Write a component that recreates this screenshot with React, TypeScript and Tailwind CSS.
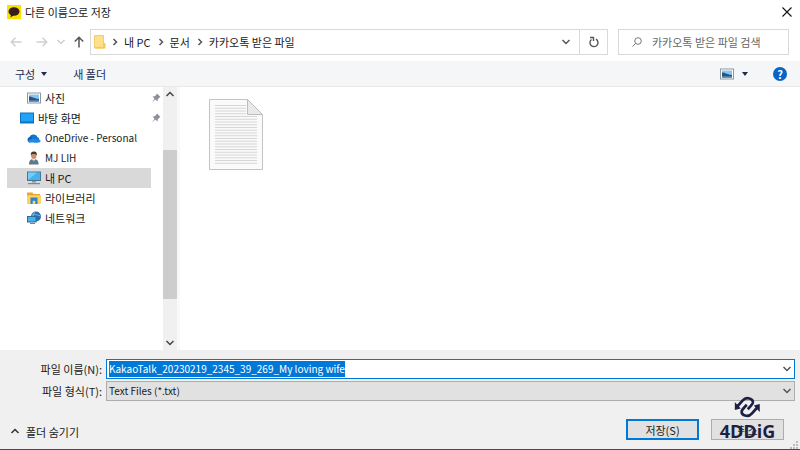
import React, { useEffect, useRef } from "react"

function Chevron({ dir, className = "" }: { dir: "up" | "down" | "right"; className?: string }) {
    const d = { up: "M1.5 6 5 2.5 8.5 6", down: "M1.5 3 5 6.5 8.5 3", right: "M3.5 2 6.5 5 3.5 8" }[dir]
    return (
        <svg viewBox="0 0 10 10" className={`size-[10px] shrink-0 ${className}`} fill="none" stroke="currentColor" strokeWidth="1.5">
            <path d={d} />
        </svg>
    )
}

function Arrow({ rotate = "" }: { rotate?: string }) {
    return (
        <svg viewBox="0 0 12 12" className={`size-3 ${rotate}`} fill="none" stroke="currentColor" strokeWidth="1.5">
            <path d="M11.5 6H1.5M5.5 1.8 1.3 6l4.2 4.2" />
        </svg>
    )
}

function PictureIcon() {
    return (
        <svg viewBox="0 0 14 12" className="h-3 w-[14px] shrink-0">
            <rect x=".5" y="1" width="13" height="10" fill="#fff" stroke="#8f979e" />
            <rect x="2" y="2.5" width="10" height="7" fill="#8cc3ee" />
            <path d="M2 4.5c3 0 4 1.6 10 2.5v2.5H2z" fill="#28547c" />
            <path d="M2 8.3h10v1.2H2z" fill="#4f8fc4" />
        </svg>
    )
}

function DesktopIcon() {
    return (
        <svg viewBox="0 0 14 12" className="h-3 w-[14px] shrink-0">
            <rect x=".5" y="1" width="13" height="10" fill="#22a4f5" stroke="#0873c4" />
            <path d="M1 10h12" stroke="#0b65ad" />
        </svg>
    )
}

function CloudIcon() {
    return (
        <svg viewBox="0 0 14 12" className="h-3 w-[14px] shrink-0">
            <path d="M3 10.5A2.8 2.8 0 0 1 2.6 5 4.2 4.2 0 0 1 10 4.3l-4 5z" fill="#0f5fb8" />
            <path d="M4 4.2A4 4 0 0 1 10.4 5a3 3 0 0 1 .4 5.5H7z" fill="#1276d3" />
            <path d="M.6 9C3 7 6 6.6 8 6.8l5.6 1.7a1.8 1.8 0 0 1-1.8 2H3A2.6 2.6 0 0 1 .6 9z" fill="#1b8ce0" />
        </svg>
    )
}

function UserIcon() {
    return (
        <svg viewBox="0 0 14 14" className="size-[14px] shrink-0">
            <path d="M2 13.5C2 9.7 3.6 8 6.6 8s5 1.7 5 5.5z" fill="#65757f" />
            <path d="m5 8 1.7 3L8.5 8z" fill="#e8eef2" />
            <ellipse cx="6.8" cy="4.5" rx="2.7" ry="3.5" fill="#c89070" />
            <path d="M3.9 4.5C3.4 1.3 5 .4 7 .4s3.4 1.3 2.7 4.1C9 3 7.5 2.8 5 3z" fill="#443a34" />
            <path d="m6 9 1 4 2-2.5z" fill="#318bc0" />
        </svg>
    )
}

function ComputerIcon() {
    return (
        <svg viewBox="0 0 14 14" className="size-[14px] shrink-0">
            <rect x=".5" y="1" width="13" height="8.5" fill="#45b2ee" stroke="#4b7690" />
            <path d="M1 9V1.5h9z" fill="#79ccf5" />
            <path d="M5 10h4v1.5H5z" fill="#8699a5" />
            <path d="M1 12.7h12" stroke="#5d7a8c" />
        </svg>
    )
}

function LibraryIcon() {
    return (
        <svg viewBox="0 0 14 12" className="h-3 w-[14px] shrink-0">
            <path d="M0 .5h5.5l1 1.5H13v9.5H0z" fill="#e9a52c" />
            <path d="M0 3.3h14v8.2H0z" fill="#ffd35d" />
            <path d="M3.5 12V5.5h7V12H8.3V8.8H5.7V12z" fill="#2787d2" />
        </svg>
    )
}

function NetworkIcon() {
    return (
        <svg viewBox="0 0 14 14" className="size-[14px] shrink-0">
            <circle cx="9" cy="5.5" r="5" fill="#2b6cae" />
            <path d="M8 1c-3 3-2 6 1 9M5 4c3-1 6 0 8.5 1" stroke="#78bde9" fill="none" />
            <rect x=".5" y="5.5" width="8.5" height="5.5" fill="#42b4f2" stroke="#326b91" />
            <path d="M3 12.5h5" stroke="#6688a0" />
        </svg>
    )
}

function Pin() {
    return (
        <svg viewBox="0 0 10 10" className="size-[10px] shrink-0 text-[#8b9198]">
            <path d="m6 .5 3.5 3.5-1 .5-1.7 1.7-.3 2.3-2.2-2L1 9.5l2.5-3.7-2-2.3 2.3-.3 1.7-1.7z" fill="currentColor" />
        </svg>
    )
}

const places = [
    { name: "사진", icon: <PictureIcon />, pinned: true },
    { name: "바탕 화면", icon: <DesktopIcon />, pinned: true, root: true },
    { name: "OneDrive - Personal", icon: <CloudIcon />, latin: true },
    { name: "MJ LIH", icon: <UserIcon />, latin: true },
    { name: "내 PC", icon: <ComputerIcon />, selected: true },
    { name: "라이브러리", icon: <LibraryIcon /> },
    { name: "네트워크", icon: <NetworkIcon /> },
]

const crumbs = ["내 PC", "문서", "카카오톡 받은 파일"]

function TitleBar() {
    return (
        <header className="flex h-6 items-center gap-1 pl-[7px] pr-2">
            <svg viewBox="0 0 14 14" className="size-[14px]">
                <rect width="14" height="14" fill="#fae100" />
                <ellipse cx="7" cy="6.5" rx="5.5" ry="4.3" fill="#371d1e" />
                <path d="m4 9-.5 3.5L7 10z" fill="#371d1e" />
            </svg>
            <h1 className="flex-1">다른 이름으로 저장</h1>
            <button aria-label="닫기">
                <svg viewBox="0 0 10 10" className="size-[10px]" stroke="#111" strokeWidth="1.1">
                    <path d="m.5.5 9 9M9.5.5l-9 9" />
                </svg>
            </button>
        </header>
    )
}

function AddressBar() {
    return (
        <nav className="flex h-9 items-center pl-[10px] pr-[11px]">
            <div className="flex w-20 shrink-0 items-center">
                <button aria-label="뒤로" className="w-[26px] text-[#cfcfcf]"><Arrow /></button>
                <button aria-label="앞으로" className="w-5 text-[#cfcfcf]"><Arrow rotate="rotate-180" /></button>
                <button aria-label="최근 위치" className="w-[17px] text-[#cfcfcf]"><Chevron dir="down" /></button>
                <button aria-label="위로" className="text-[#555]"><Arrow rotate="rotate-90" /></button>
            </div>
            <div className="flex h-[26px] flex-1 items-center border border-[#d9d9d9] pl-[3px]">
                <svg viewBox="0 0 12 14" className="mr-1 h-[14px] w-3">
                    <path d="M.5.5h9V13h-9z" fill="#ffe08a" stroke="#f3cd6c" />
                    <path d="M9.5 8h2v5.5H1V12h8.5z" fill="#f7c94f" />
                </svg>
                {crumbs.map((c) => (
                    <React.Fragment key={c}>
                        <Chevron dir="right" className="text-[#555]" />
                        <button className="pl-1 pr-[5px]">{c}</button>
                    </React.Fragment>
                ))}
                <button aria-label="이전 위치" className="ml-auto mr-2 text-[#555]"><Chevron dir="down" /></button>
                <button aria-label="새로 고침" className="flex h-full w-7 items-center justify-center border-l border-[#d9d9d9] text-[#555]">
                    <svg viewBox="0 0 10 12" className="h-3 w-[10px]" fill="none" stroke="currentColor" strokeWidth="1.4">
                        <path d="M7 3.2A4 4 0 1 1 2.5 3.5M1 1.5h3.500V5" />
                    </svg>
                </button>
            </div>
            <label className="ml-[10px] flex h-[26px] w-[171px] items-center border border-[#d9d9d9] pl-[13px]">
                <svg viewBox="0 0 10 10" className="size-[10px] shrink-0" fill="none" stroke="#777">
                    <circle cx="6" cy="4" r="3.3" />
                    <path d="M3.6 6.4.5 9.5" />
                </svg>
                <input type="search" aria-label="검색" placeholder="카카오톡 받은 파일 검색" className="ml-[10px] w-full min-w-0 outline-none placeholder:text-[#666]" />
            </label>
        </nav>
    )
}

function Toolbar() {
    return (
        <div className="mt-px flex h-[26px] items-center border-b border-[#e8e8e8] bg-[#f5f6f7] pl-[15px] pr-[13px] text-[#1e2b52]">
            <button className="flex items-center gap-[6px]">
                구성
                <svg viewBox="0 0 6 4" className="h-1 w-[6px]"><path d="M0 0h6L3 4z" fill="currentColor" /></svg>
            </button>
            <button className="ml-[26px]">새 폴더</button>
            <button aria-label="보기" className="ml-auto flex items-center gap-2">
                <PictureIcon />
                <svg viewBox="0 0 6 4" className="h-1 w-[6px]"><path d="M0 0h6L3 4z" fill="currentColor" /></svg>
            </button>
            <button aria-label="도움말" className="ml-[25px] size-[14px] rounded-full bg-[#0a64c8] text-center font-bold leading-[14px] text-white">?</button>
        </div>
    )
}

function Sidebar() {
    return (
        <aside className="flex w-[180px] shrink-0 border-r-[3px] border-[#f9f9f9]">
            <ul className="flex-1 pl-[7px] pr-3 pt-px">
                {places.map((p) => (
                    <li key={p.name}>
                        <button className={`flex h-5 w-full items-center gap-1 ${p.root ? "pl-[13px]" : "pl-5"} ${p.selected ? "bg-[#d9d9d9]" : ""}`}>
                            {p.icon}
                            <span className={`flex-1 whitespace-nowrap text-left ${p.latin ? "text-[10px]" : ""}`}>{p.name}</span>
                        </button>
                    </li>
                ))}
            </ul>
            <div className="-ml-3 w-3 pt-[6px]">
                {places.filter((p) => p.pinned).map((p) => (
                    <div key={p.name} className="flex h-5 items-start"><Pin /></div>
                ))}
            </div>
            <div className="flex w-[14px] shrink-0 flex-col items-center bg-[#f0f0f0] text-[#444]">
                <button aria-label="위로 스크롤" className="flex h-4 items-center"><Chevron dir="up" /></button>
                <div className="h-[47px]" />
                <div className="h-[149px] w-full bg-[#cdcdcd]" />
                <button aria-label="아래로 스크롤" className="mt-auto flex h-[14px] items-center"><Chevron dir="down" /></button>
            </div>
        </aside>
    )
}

function TextFile() {
    return (
        <svg viewBox="0 0 54 72" className="h-[72px] w-[54px]">
            <path d="M.5.5h38l15 15v55H.5z" fill="#fafafa" stroke="#c4c4c4" />
            {Array.from({ length: 22 }, (_, i) => (
                <path key={i} d={`M6 ${6.5 + i * 2.75}h${i < 4 ? 31 : 42}`} stroke="#d6d6d6" />
            ))}
            <path d="M38.5.5v15h15z" fill="#e9e9e9" stroke="#bdbdbd" />
        </svg>
    )
}

function Watermark() {
    return (
        <div className="pointer-events-none absolute -top-6 left-1/2 flex -translate-x-1/2 flex-col items-center text-[#1d1f45]">
            <svg viewBox="0 0 26 24" className="h-6 w-[26px]" fill="none" stroke="currentColor" strokeWidth="2.7">
                <path d="M3 11.500 8.500 5.300C12 1.200 19.500 3.500 18.500 8c-.3 1.200-1.500 2.500-5 6.200" />
                <path d="M23 12.500 17.500 18.700C14 22.800 6.500 20.500 7.500 16c.3-1.200 1.500-2.500 5-6.200" />
                <path d="M.5 7v8l6-1.500zM25.500 17V9l-6 1.500z" fill="currentColor" stroke="none" />
            </svg>
            <span className="font-['Open_Sans'] text-[18px] font-bold leading-6">4DDiG</span>
        </div>
    )
}

function Footer() {
    const nameRef = useRef<HTMLInputElement>(null)

    // the proposed name starts selected, so typing replaces it
    useEffect(() => {
        nameRef.current?.focus()
        nameRef.current?.select()
    }, [])

    return (
        <footer className="border-b border-[#4a4a4a] bg-[#f0f0f0] pt-[9px]">
            <div className="flex flex-col gap-[2px] pr-[5px]">
                <div className="flex h-5 items-center">
                    <label htmlFor="name" className="w-[106px] pr-1 text-right">파일 이름(N):</label>
                    <div className="flex h-full flex-1 items-center border border-[#0078d7] bg-white px-[2px]">
                        <input
                            id="name"
                            ref={nameRef}
                            defaultValue="KakaoTalk_20230219_2345_39_269_My loving wife"
                            className="min-w-0 flex-1 text-[10px] outline-none selection:bg-[#0078d7] selection:text-white"
                        />
                        <Chevron dir="down" className="text-[#555]" />
                    </div>
                </div>
                <div className="flex h-5 items-center">
                    <label htmlFor="type" className="w-[106px] pr-1 text-right">파일 형식(T):</label>
                    <div className="flex h-full flex-1 items-center border border-[#adadad] bg-[#e1e1e1] px-[2px]">
                        <select id="type" className="min-w-0 flex-1 appearance-none text-[10px] outline-none">
                            <option>Text Files (*.txt)</option>
                        </select>
                        <Chevron dir="down" className="text-[#555]" />
                    </div>
                </div>
            </div>
            <div className="flex items-end pl-[10px] pt-[18px]">
                <button className="mb-[9px] flex items-center gap-[6px]">
                    <Chevron dir="up" className="text-[#333]" />
                    폴더 숨기기
                </button>
                <button className="mb-[9px] ml-auto h-[21px] w-[73px] border-2 border-[#0078d7] bg-[#e1e1e1] leading-4">저장(S)</button>
                <div className="relative mb-[9px] ml-3">
                    <button className="block h-[21px] w-[73px] border border-[#adadad] bg-[#e1e1e1] leading-4">취소</button>
                    <Watermark />
                </div>
                <svg viewBox="0 0 8 8" className="ml-[6px] mr-[2px] size-2" fill="#bdbdbd">
                    <path d="M6 0h2v2H6zM3 3h2v2H3zM6 3h2v2H6zM0 6h2v2H0zM3 6h2v2H3zM6 6h2v2H6z" />
                </svg>
            </div>
        </footer>
    )
}

export default function App() {
    return (
        <div className="flex min-h-screen flex-col bg-white font-['Noto_Sans_CJK_KR',sans-serif] text-[11px] leading-4 text-[#1a1a1a]">
            <TitleBar />
            <AddressBar />
            <Toolbar />
            <main className="flex flex-1">
                <Sidebar />
                <section className="pl-[29px] pt-3">
                    <TextFile />
                </section>
            </main>
            <Footer />
        </div>
    )
}
